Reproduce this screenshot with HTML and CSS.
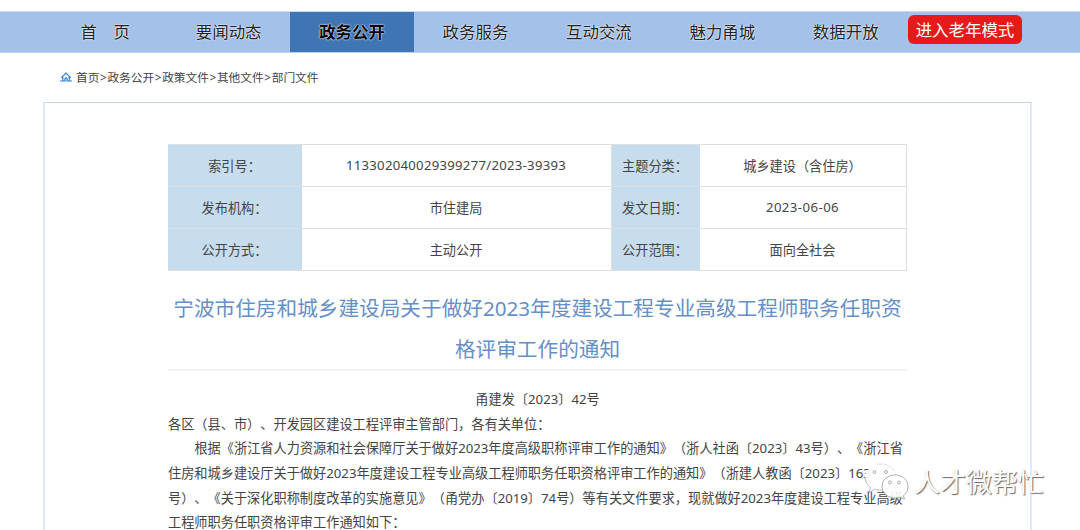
FILE: index.html
```html
<!DOCTYPE html>
<html lang="zh-CN">
<head>
<meta charset="utf-8">
<title>宁波市住房和城乡建设局</title>
<link rel="stylesheet" href="styles.css">
</head>
<body>
<nav class="nav">
  <a class="nav-item">首　页</a>
  <a class="nav-item">要闻动态</a>
  <a class="nav-item active">政务公开</a>
  <a class="nav-item">政务服务</a>
  <a class="nav-item">互动交流</a>
  <a class="nav-item">魅力甬城</a>
  <a class="nav-item">数据开放</a>
  <a class="senior">进入老年模式</a>
</nav>
<div class="crumbs">
  <svg class="home" viewBox="0 0 12 10"><path d="M1.200 5.800 6 1l4.800 4.800M2.800 5v3.500M9.200 5v3.500M0 9h5V6.600Q6 5 7 6.600V9h5" fill="none" stroke="#2f7fd6" stroke-width="1.200"/></svg>
  <span>首页<i class="sep">&gt;</i>政务公开<i class="sep">&gt;</i>政策文件<i class="sep">&gt;</i>其他文件<i class="sep">&gt;</i>部门文件</span>
</div>
<main class="panel">
  <table class="meta">
    <colgroup><col class="c1"><col class="c2"><col class="c3"><col class="c4"></colgroup>
    <tr><th>索引号：</th><td class="num">113302040029399277/2023-39393</td><th>主题分类：</th><td>城乡建设（含住房）</td></tr>
    <tr><th>发布机构：</th><td>市住建局</td><th>发文日期：</th><td class="num date">2023-06-06</td></tr>
    <tr><th>公开方式：</th><td>主动公开</td><th>公开范围：</th><td>面向全社会</td></tr>
  </table>
  <h1 class="title">宁波市住房和城乡建设局关于做好2023年度建设工程专业高级工程师职务任职资<br>格评审工作的通知</h1>
  <article class="body">
    <p class="docno">甬建发〔2023〕42号</p>
    <p>各区（县、市）、开发园区建设工程评审主管部门，各有关单位：</p>
    <p class="indent">根据《浙江省人力资源和社会保障厅关于做好2023年度高级职称评审工作的通知》（浙人社函〔2023〕43号）、《浙江省<br>住房和城乡建设厅关于做好2023年度建设工程专业高级工程师职务任职资格评审工作的通知》（浙建人教函〔2023〕163<br>号）、《关于深化职称制度改革的实施意见》（甬党办〔2019〕74号）等有关文件要求，现就做好2023年度建设工程专业高级<br>工程师职务任职资格评审工作通知如下：</p>
  </article>
</main>
<div class="watermark">
  <svg class="bubbles" viewBox="0 0 46 40">
    <path d="M17 2C8 2 1 8 1 15.500c0 4 2 7.500 5.500 10L5 31l5.500-3.700c2 .7 4.200 1 6.500 1 9 0 15-6 15-13.300S26 2 17 2z" fill="#fff" fill-opacity=".9"/>
    <path d="M1 15c0 4 2 8 5.500 10.500L5 31l5.500-3.700c2 .7 4.500 1 7.500.7" fill="none" stroke="#999" stroke-width=".7"/>
    <path d="M13 2.300c7-1.300 14 1 17.500 7" fill="none" stroke="#ccc" stroke-width=".6"/>
    <path d="M31 13c-7.500 0-13 5-13 11.300S23.500 36 31 36c1.800 0 3.500-.3 5-.8l4.500 1.800-1.200-3.300C42.300 31.500 44 28 44 24.300 44 18 38.500 13 31 13z" fill="#fff" fill-opacity=".9" stroke="#999" stroke-width=".8"/>
    <g fill="#fff" stroke="#999" stroke-width=".8"><circle cx="10.500" cy="10" r="1.500"/><circle cx="22" cy="10" r="1.500"/><circle cx="26" cy="20.500" r="1.500"/><circle cx="35" cy="20.500" r="1.500"/></g>
  </svg>
  <span class="wm-text">人才微帮忙</span>
</div>
</body>
</html>
```
FILE: styles.css
```css
* { box-sizing: border-box; }
html, body { height: 530px; overflow: hidden; }
body {
  margin: 0;
  padding-top: 11px;
  background: #fff;
  color: #444;
  font-family: "Noto Sans", "Noto Sans CJK SC", sans-serif;
  font-size: 13.17px;
  font-weight: 400;
  font-kerning: none;
  text-spacing-trim: space-all;
}
.nav {
  display: flex;
  height: 42px;
  padding-left: 43.500px;
  align-items: stretch;
  background: #a3c1e9;
  border-top: 1px solid #c9dcf4;
  border-bottom: 1px solid #b9d0ef;
}
.nav-item {
  flex: 0 0 123.430px;
  text-align: center;
  font-size: 16.450px;
  line-height: 40px;
  color: #222;
  text-shadow: 0 0 2px #fff, 0 0 1px #fff;
}
.nav-item.active { background: #4075b5; color: #000; font-weight: 700; }
.senior {
  width: 114px;
  height: 29px;
  margin: 3px 0 0 .5px;
  border-radius: 6px;
  background: #e61a1a;
  color: #fff;
  font-size: 16.450px;
  line-height: 29px;
  text-align: center;
  white-space: nowrap;
}
.crumbs {
  display: flex;
  height: 49px;
  padding: 0 0 2px 60px;
  gap: 4px;
  align-items: center;
  font-size: 11.700px;
  white-space: nowrap;
}
.sep {
  display: inline-block;
  width: 8px;
  text-align: center;
  font-style: normal;
}
.home { width: 12px; height: 10px; }
.panel {
  width: 989px;
  height: 440px;
  margin-left: 43px;
  padding: 41px 123px 0;
  border: solid #dfe9f7;
  border-width: 1px 2px 0;
  border-top-color: #c5d4ea;
}
.meta {
  width: 739px;
  border-collapse: collapse;
  table-layout: fixed;
}
.c1 { width: 133px; }
.c2 { width: 310px; }
.c3 { width: 88px; }
.meta tr { height: 42px; }
.meta th, .meta td {
  padding: 0 1px 1px 0;
  border: 1px solid #dedede;
  text-align: center;
  font-weight: 400;
  white-space: nowrap;
}
.meta th { background: #c7dcec; border-left-color: #c7dcec; border-right-color: #c7dcec; }
.meta .num { letter-spacing: .27px; }
.meta .date { letter-spacing: .45px; }
.title {
  width: 739px;
  height: 83px;
  margin: 16.500px 0 0;
  border-bottom: 2px solid #f2f2f2;
  color: #668fc6;
  font-size: 20.650px;
  font-weight: 400;
  line-height: 41.150px;
  text-align: center;
  white-space: nowrap;
}
.body {
  padding-top: 16.500px;
  font-size: 13.200px;
  line-height: 24.680px;
  white-space: nowrap;
}
.body p { margin: 0; }
.body .docno { width: 739px; text-align: center; }
.body .indent { text-indent: 2em; }
.watermark {
  position: absolute;
  left: 864px;
  top: 461px;
  display: flex;
  align-items: center;
  gap: 4px;
}
.bubbles { width: 46px; height: 40px; }
.wm-text {
  color: #fff;
  font-size: 26px;
  line-height: 42px;
  text-shadow: 1px 1px 1px #666, 0 0 1px #ccc;
}
```
